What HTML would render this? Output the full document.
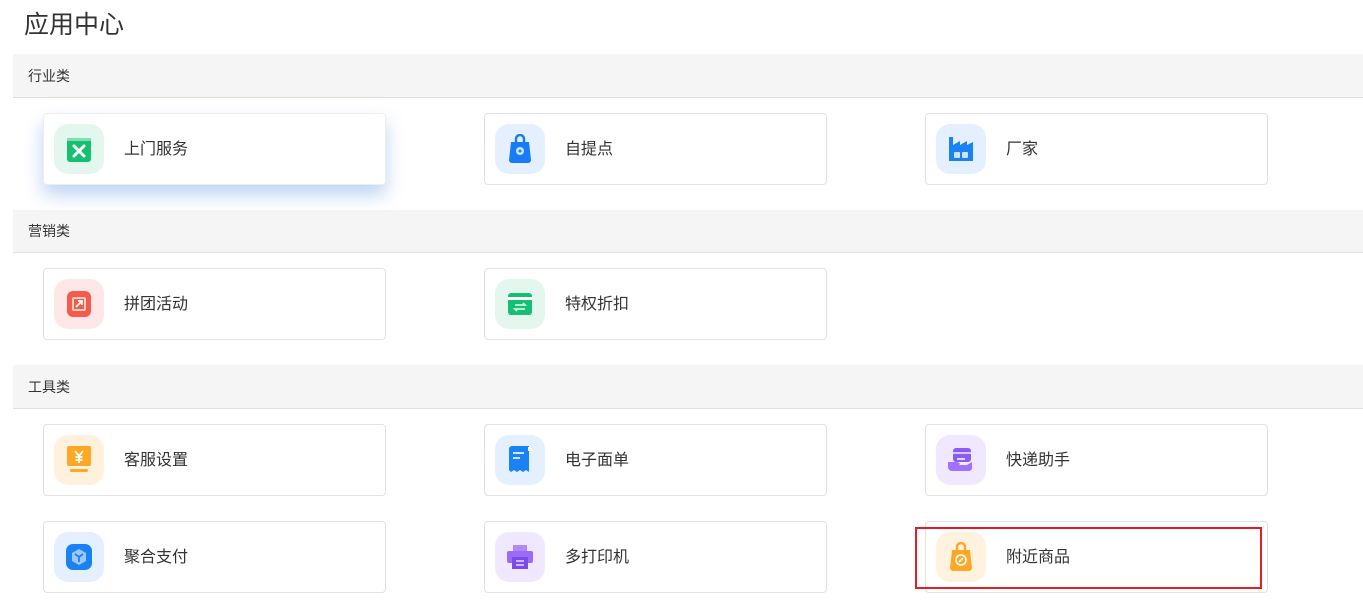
<!DOCTYPE html>
<html><head><meta charset="utf-8"><style>
*{margin:0;padding:0;box-sizing:border-box}
body{width:1363px;height:607px;background:#fff;font-family:"Liberation Sans","Noto Sans CJK SC",sans-serif;color:#333;position:relative;overflow:hidden}
.title{position:absolute;left:24px;top:9px;font-size:25px;color:#333;line-height:32px}
.sec{position:absolute;left:13px;right:0;background:#f5f5f5;border-bottom:1px solid #e0e0e0;font-size:14px;color:#333;padding-left:15px}
.card{position:absolute;width:343px;height:72px;border:1px solid #e2e2e2;border-radius:4px;background:#fff}
.card .ic{position:absolute;left:10px;top:10px;width:50px;height:50px;border-radius:14px;display:flex;align-items:center;justify-content:center}
.card .t{position:absolute;left:80px;top:0;line-height:72px;font-size:16px;color:#333}
.sh{box-shadow:0 10px 18px rgba(70,130,220,.35);border-color:#eee}
</style></head><body>
<div class="title">应用中心</div>

<div class="sec" style="top:54px;height:44px;line-height:44px">行业类</div>
<div class="sec" style="top:210px;height:43px;line-height:43px">营销类</div>
<div class="sec" style="top:365px;height:44px;line-height:44px">工具类</div>

<div class="card sh" style="left:43px;top:113px"><div class="ic" style="background:#e3f7ee"><svg width="26" height="26" viewBox="0 0 26 26"><rect x="1" y="2" width="24" height="24" rx="3" fill="#16c072"/><rect x="1" y="2" width="24" height="3" fill="#7ee0b0"/><path d="M8 10l10 10M18 10l-10 10" stroke="#fff" stroke-width="3" stroke-linecap="round"/></svg></div><div class="t">上门服务</div></div>
<div class="card" style="left:484px;top:113px"><div class="ic" style="background:#e4f0ff"><svg width="24" height="30" viewBox="0 0 24 30"><path d="M8 8V5a4 4 0 0 1 8 0v3" stroke="#1a7cf5" stroke-width="2.5" fill="none"/><path d="M3 8h18l2 18a3 3 0 0 1-3 3H4a3 3 0 0 1-3-3z" fill="#1a7cf5"/><circle cx="12" cy="17" r="4" fill="#cfe3ff"/><circle cx="12" cy="17" r="1.5" fill="#1a7cf5"/></svg></div><div class="t">自提点</div></div>
<div class="card" style="left:925px;top:113px"><div class="ic" style="background:#e4f0ff"><svg width="28" height="28" viewBox="0 0 28 28"><path d="M2 2h4v8l7-4v4l7-4v4l6-3v19H2z" fill="#1a82f5"/><rect x="7" y="17" width="6" height="6" rx="1" fill="#cfe3ff"/><rect x="15" y="17" width="6" height="6" rx="1" fill="#cfe3ff"/></svg></div><div class="t">厂家</div></div>

<div class="card" style="left:43px;top:268px"><div class="ic" style="background:#ffe7e7"><svg width="26" height="28" viewBox="0 0 26 28"><rect x="1" y="1" width="24" height="26" rx="6" fill="#f55a4a"/><rect x="7" y="8" width="12" height="12" rx="1" stroke="#ffd0c8" stroke-width="2" fill="none"/><path d="M10 17l6-6M12 11h4v4" stroke="#fff" stroke-width="1.8" fill="none"/></svg></div><div class="t">拼团活动</div></div>
<div class="card" style="left:484px;top:268px"><div class="ic" style="background:#e3f7ee"><svg width="26" height="26" viewBox="0 0 26 26"><rect x="1" y="2" width="24" height="22" rx="3" fill="#16c072"/><rect x="1" y="6" width="24" height="3" fill="#fff"/><path d="M8 14h10l-2-2M18 18H8l2 2" stroke="#c8f5df" stroke-width="1.8" fill="none"/></svg></div><div class="t">特权折扣</div></div>

<div class="card" style="left:43px;top:424px"><div class="ic" style="background:#fff1dc"><svg width="24" height="28" viewBox="0 0 24 28"><rect x="0" y="0" width="24" height="20" rx="2" fill="#ffa726"/><rect x="3" y="23" width="18" height="3" rx="1.5" fill="#ffa726"/><path d="M8 5l4 5 4-5M12 10v7M8.5 11h7M8.5 14h7" stroke="#fff" stroke-width="1.8" fill="none"/></svg></div><div class="t">客服设置</div></div>
<div class="card" style="left:484px;top:424px"><div class="ic" style="background:#e4f0ff"><svg width="24" height="28" viewBox="0 0 24 28"><path d="M1 3a3 3 0 0 1 3-3h17v26l-3-2-3 2-3-2-3 2-3-2-3 2-2-2z" fill="#1a82f5"/><rect x="20" y="1" width="3" height="4" fill="#fff"/><rect x="5" y="6" width="11" height="2" fill="#cfe3ff"/><rect x="5" y="11" width="7" height="2" fill="#cfe3ff"/></svg></div><div class="t">电子面单</div></div>
<div class="card" style="left:925px;top:424px"><div class="ic" style="background:#f0e8ff"><svg width="28" height="26" viewBox="0 0 28 26"><rect x="6" y="1" width="18" height="14" rx="3" fill="#8a5cf5"/><rect x="6" y="5" width="18" height="2" fill="#d8c8ff"/><path d="M1 15h8c3 0 5 2 3 3h8l5-3v6c0 2-2 3-4 3H5a4 4 0 0 1-4-4z" fill="#a070ff"/><path d="M10 12h8" stroke="#fff" stroke-width="1.5"/></svg></div><div class="t">快递助手</div></div>

<div class="card" style="left:43px;top:521px"><div class="ic" style="background:#e4f0ff"><svg width="28" height="28" viewBox="0 0 28 28"><rect x="1" y="1" width="26" height="26" rx="7" fill="#1a82f5"/><path d="M14 6l7 4v8l-7 4-7-4v-8z" fill="#9cc8ff"/><path d="M10 11l4 3 4-3M14 14v5" stroke="#1a82f5" stroke-width="1.8" fill="none"/></svg></div><div class="t">聚合支付</div></div>
<div class="card" style="left:484px;top:521px"><div class="ic" style="background:#f0e8ff"><svg width="28" height="28" viewBox="0 0 28 28"><rect x="7" y="2" width="14" height="7" fill="#b08af8"/><rect x="1" y="8" width="26" height="12" rx="2" fill="#9a6cf5"/><rect x="6" y="14" width="16" height="12" fill="#7c4ae8"/><path d="M10 18h8M10 22h8" stroke="#e6dbff" stroke-width="1.6"/></svg></div><div class="t">多打印机</div></div>
<div class="card" style="left:925px;top:521px"><div class="ic" style="background:#fff3e0"><svg width="24" height="30" viewBox="0 0 24 30"><path d="M8 8V5a4 4 0 0 1 8 0v3" stroke="#ffa726" stroke-width="2.5" fill="none"/><path d="M3 8h18l2 18a3 3 0 0 1-3 3H4a3 3 0 0 1-3-3z" fill="#ffa726"/><circle cx="12" cy="18" r="5" stroke="#fff" stroke-width="1.6" fill="none"/><path d="M10 20l4-4" stroke="#fff" stroke-width="1.6"/></svg></div><div class="t">附近商品</div></div>

<div style="position:absolute;left:915px;top:527px;width:347px;height:62px;border:2px solid #e51c23"></div>
</body></html>
